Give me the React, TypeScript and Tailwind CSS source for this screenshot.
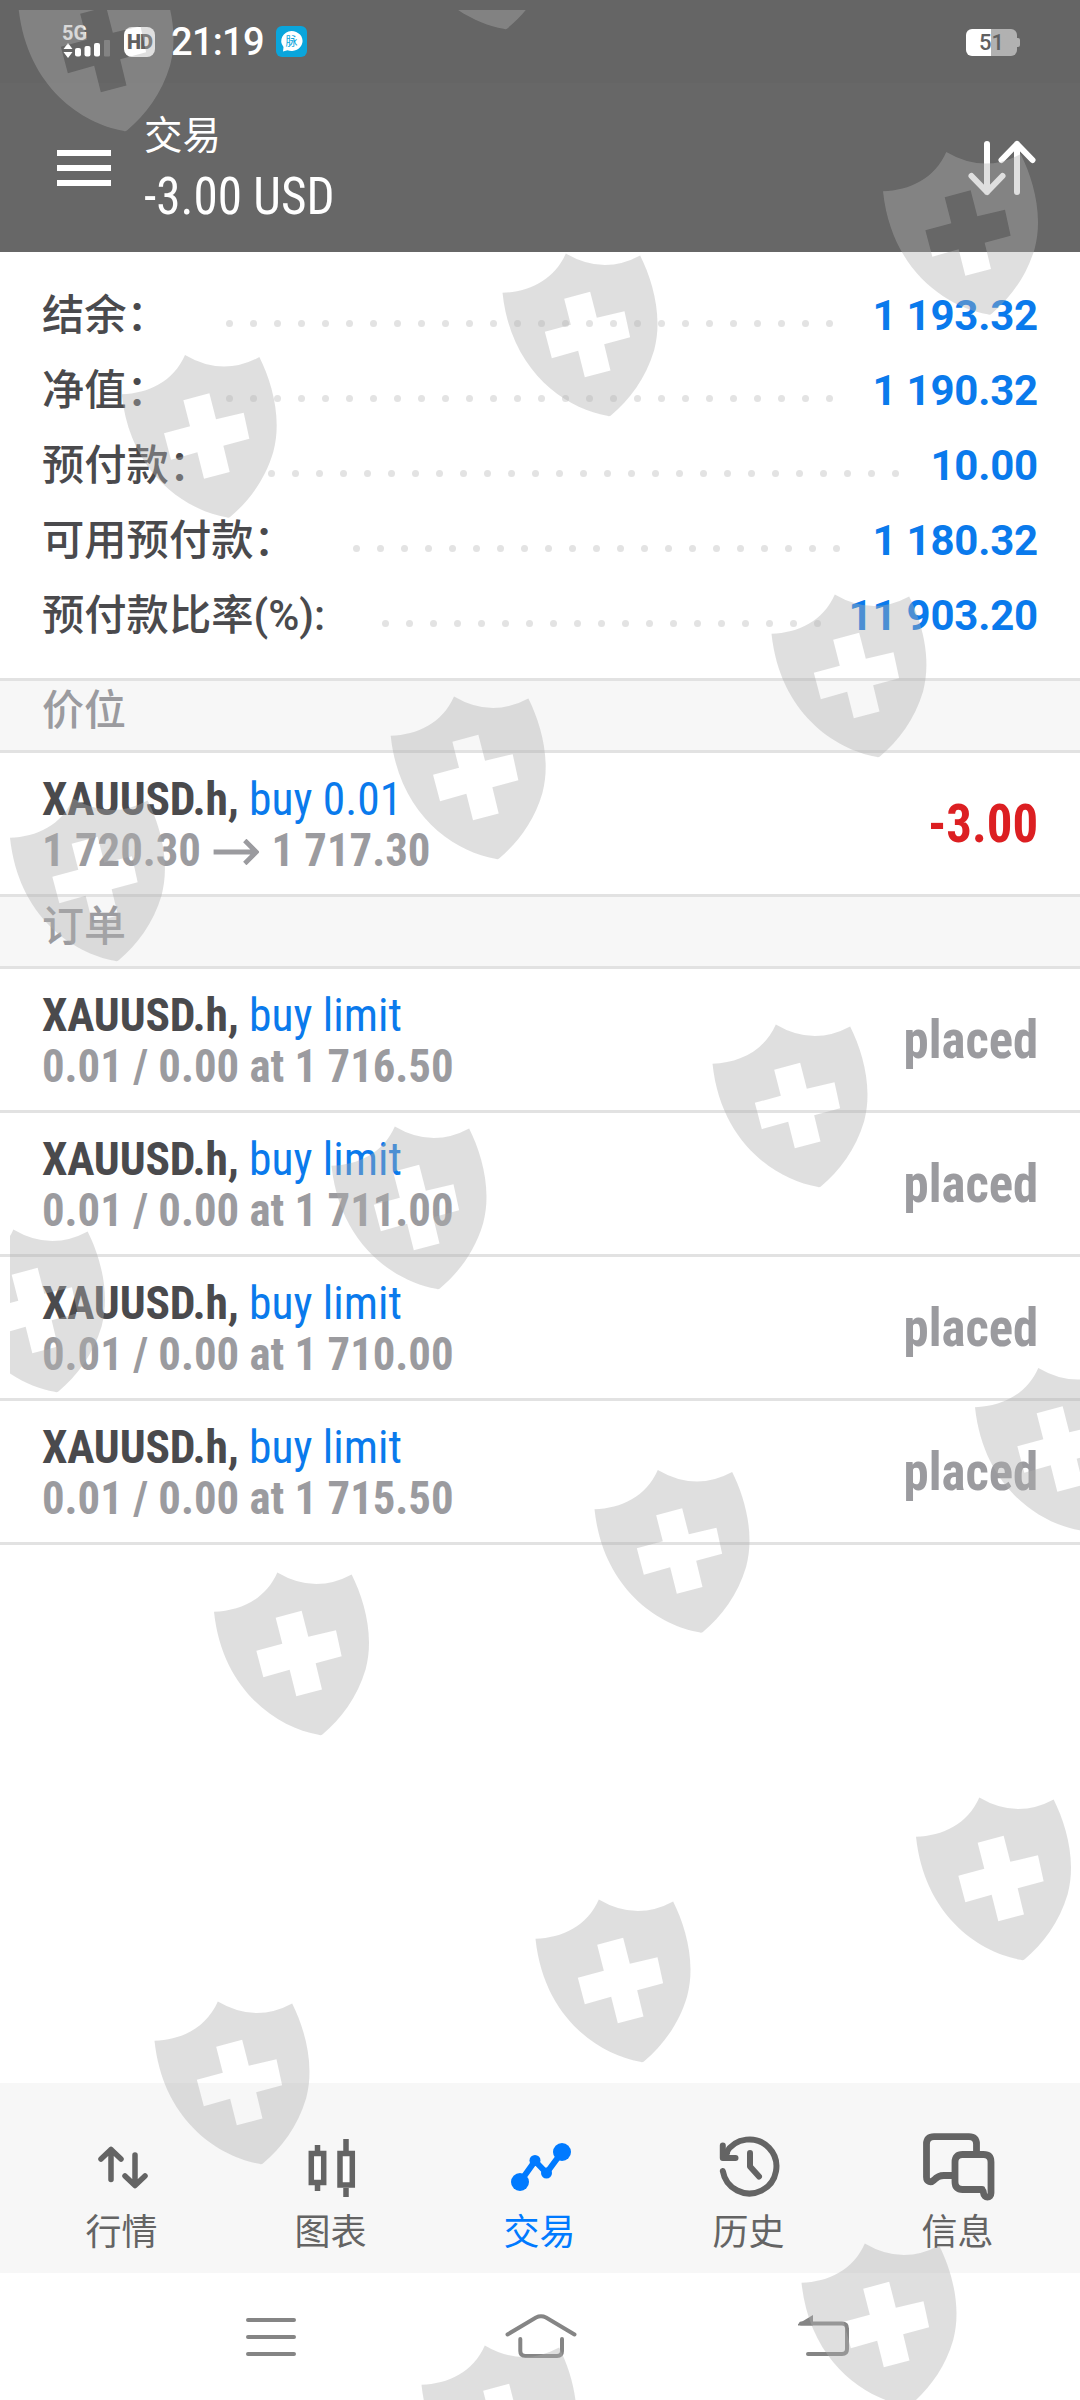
import type { ReactNode } from "react";

const account = [
  { label: "结余：", value: "1 193.32", dots: 26 },
  { label: "净值：", value: "1 190.32", dots: 26 },
  { label: "预付款：", value: "10.00", dots: 27 },
  { label: "可用预付款：", value: "1 180.32", dots: 21 },
  { label: "预付款比率(%):", value: "11 903.20", dots: 19 },
];

const orders = ["1 716.50", "1 711.00", "1 710.00", "1 715.50"];

// top-left corner of every watermark shield
const shields = [
  [399, -133.5], [18.5, -31.5],
  [883, 152], [502.5, 253.5], [121.7, 355],
  [771.5, 594.5], [390.7, 696.5], [10, 798.5],
  [712.5, 1024.5], [331.5, 1126.5], [-50, 1229.5],
  [975, 1368], [594.5, 1470], [214, 1572.5],
  [916, 1797.5], [535.5, 1899.5], [154.5, 2001.5],
  [801.5, 2243.5], [421.5, 2345.5],
];

const shieldPath =
  "M190 0Q302 66 413 6C450 80 482 190 455 290C430 375 380 440 326 485Q321 490 314 487C190 465 25 355 0 118C80 115 155 80 190 0Z" +
  "M185 136L263 115L283 193L366 173L383 251L305 272L324 351L247 371L227 292L148 314L127 235L205 214Z";

export default function App() {
  return (
    <div className="relative flex h-[2400px] w-[1080px] flex-col overflow-hidden bg-white font-[Roboto,'Noto_Sans_CJK_SC',sans-serif]">
      <StatusBar />
      <Header />
      <Account />
      <SectionTitle>价位</SectionTitle>
      <Row
        last
        action="buy 0.01"
        right={<Cond className="origin-right scale-x-[0.94] text-[54px] font-bold text-[#dc1f22]">-3.00</Cond>}
      >
        <span>1 720.30</span>
        <svg className="mx-[13px] mt-[5px]" width="48" height="26" fill="none" stroke="currentColor" strokeWidth="5">
          <path d="M0 13H45M33 1.5L45 13L33 24.500" />
        </svg>
        <span>1 717.30</span>
      </Row>
      <SectionTitle>订单</SectionTitle>
      {orders.map((price) => (
        <Row
          key={price}
          action="buy limit"
          right={<Cond className="origin-right scale-x-[0.94] text-[54px] font-bold text-[#9b9b9f]">placed</Cond>}
        >
          0.01 / 0.00 at {price}
        </Row>
      ))}
      <TabBar />
      <SystemNav />
      <Watermark />
    </div>
  );
}

function Cond({ children, className = "" }: { children: ReactNode; className?: string }) {
  return <span className={`whitespace-pre [font-stretch:75%] ${className}`}>{children}</span>;
}

function StatusBar() {
  return (
    <div className="flex h-[83px] shrink-0 items-start bg-[#656565] pl-[62px] pt-[26px] text-white">
      <div className="h-[32px] w-[48px]">
        <div className="h-[16px] text-[20px] font-bold leading-[14px] text-[#f4f4f4]">5G</div>
        <svg width="48" height="16" overflow="visible" fill="#fff">
          <path d="M6 1L10.500 7H1.500ZM6 16L10.500 10H1.500Z" />
          <rect x="13" y="6" width="6" height="8.500" rx="2" />
          <rect x="22.500" y="4" width="6" height="10.500" rx="2" />
          <rect x="32" y="1" width="6" height="13.500" rx="2" />
          <rect x="42" y="-2" width="6" height="16.500" rx="1" opacity=".2" />
        </svg>
      </div>
      <div className="ml-[14px] mt-px flex h-[30px] w-[31px] items-center justify-center rounded-[8px] bg-white text-[20px] font-black tracking-[-1px] text-[#606060]">
        HD
      </div>
      <div className="ml-[16px] w-[94px] text-[38px] font-medium leading-[33px] tracking-[-0.7px]">21:19</div>
      <svg className="ml-[11px]" width="31" height="31" viewBox="0 0 31 31">
        <rect width="31" height="31" rx="6" fill="#0aa5dc" />
        <path d="M15.500 5a11 10 0 1 1-4 19.300L7 25.500L7.500 21A11 10 0 0 1 15.500 5Z" fill="#fff" />
        <text x="15.500" y="19.500" textAnchor="middle" fontSize="12" fill="#0aa5dc">脉</text>
      </svg>
      <div className="ml-auto mr-[60px] mt-[3px] flex items-center">
        <div className="flex h-[27px] w-[51px] items-center justify-center rounded-[6px] bg-linear-to-r from-white from-50% to-[#b1b1b1] to-50% text-[22px] font-medium text-[#606060]">
          51
        </div>
        <div className="h-[9px] w-[3px] rounded-r-[2px] bg-[#b1b1b1]" />
      </div>
    </div>
  );
}

function Header() {
  return (
    <header className="flex h-[169px] shrink-0 items-start bg-[#676767] pl-[57px] text-white">
      <div className="mt-[67px] flex w-[54px] flex-col gap-[9px]">
        <div className="h-[6px] bg-white" />
        <div className="h-[6px] bg-white" />
        <div className="h-[6px] bg-white" />
      </div>
      <div className="ml-[33px] mt-[29px] flex flex-col items-start">
        <div className="h-[55px] text-[38.5px] leading-[48px]">交易</div>
        <Cond className="origin-left scale-x-[0.965] text-[51px] leading-[60px]">-3.00 USD</Cond>
      </div>
      <svg
        className="ml-auto mr-[44px] mt-[55px]"
        width="68"
        height="60"
        fill="none"
        stroke="#fff"
        strokeWidth="6"
        strokeLinecap="round"
        strokeLinejoin="round"
      >
        <path d="M19 6V54M3.500 38L19 54L34.500 38M49 54V6M33.500 22L49 6L64.500 22" />
      </svg>
    </header>
  );
}

function Account() {
  return (
    <section className="flex h-[426px] shrink-0 flex-col px-[42px] pt-[26px]">
      {account.map((row) => (
        <div key={row.label} className="flex h-[75px] items-center text-[42px] leading-[60px]">
          <span className="text-[42.3px] font-medium text-[#4a4a4d]">{row.label}</span>
          <span className="ml-[57px] mt-[15px] flex gap-[17px]">
            {Array.from({ length: row.dots }, (_, i) => (
              <i key={i} className="size-[7px] rounded-full bg-[#e3e3e3]" />
            ))}
          </span>
          <span className="ml-auto font-bold tracking-[-0.2px] text-[#0a7aec]">{row.value}</span>
        </div>
      ))}
    </section>
  );
}

function SectionTitle({ children }: { children: ReactNode }) {
  return (
    <div className="h-[75px] shrink-0 border-y-[3px] border-[#e2e2e2] bg-[#f7f7f7] pl-[42px] text-[42px] font-medium leading-[60px] text-[#9b9b9f]">
      {children}
    </div>
  );
}

interface RowProps {
  action: string;
  right: ReactNode;
  children: ReactNode;
  last?: boolean;
}

function Row({ action, right, children, last }: RowProps) {
  return (
    <div
      className={`flex shrink-0 items-center justify-between px-[42px] ${
        last ? "h-[141px]" : "h-[144px] border-b-[3px] border-[#e2e2e2]"
      }`}
    >
      <div className="text-[47px] leading-[51px]">
        <div className="origin-left scale-x-[0.968]">
          <Cond className="font-bold tracking-[-0.2px] text-[#4a4a4d]">XAUUSD.h, </Cond>
          <Cond className="text-[#0a7aec]">{action}</Cond>
        </div>
        <Cond className="flex origin-left scale-x-[0.952] items-center font-bold text-[#9b9b9f]">{children}</Cond>
      </div>
      {right}
    </div>
  );
}

const tabs = [
  {
    label: "行情",
    icon: <path d="M25 48.500V18.500M15 28L25 18.500L35 28M49 24V54M39 45L49 54.500L59 45" strokeWidth="5.500" />,
  },
  {
    label: "图表",
    icon: (
      <g strokeWidth="5.500" strokeLinecap="butt" strokeLinejoin="miter">
        <path d="M22.500 14V20M22.500 54V60M51 8V20M51 57V66" />
        <path d="M16.300 22.500H28.700V51.500H16.300ZM45 22.500H57.300V54H45Z" fill="#fcfcfc" />
      </g>
    ),
  },
  {
    label: "交易",
    active: true,
    icon: (
      <g strokeWidth="6">
        <path d="M16 51L31 30L42.500 42L58 21" />
        <g fill="currentColor" stroke="none">
          <circle cx="16" cy="51" r="9" />
          <circle cx="31" cy="29.500" r="5.500" />
          <circle cx="42.500" cy="42" r="5.500" />
          <circle cx="58" cy="21" r="9" />
        </g>
      </g>
    ),
  },
  {
    label: "历史",
    icon: (
      <g strokeWidth="6">
        <path d="M9.800 40A27 27 0 1 0 13 22" />
        <path d="M9.800 14.500V27H22.500M10.500 26L14 22" />
        <path d="M37 22V35.500L46 45.500" />
      </g>
    ),
  },
  {
    label: "信息",
    icon: (
      <g strokeWidth="6.800">
        <path d="M54.500 21V13Q54.500 5.700 47 5.700H12Q4.500 5.700 4.500 13V46C4.500 51 9 52 12 49Q16 44.500 22 44.500H30" />
        <path d="M60 58.500H40.500Q33 58.500 33 51V31Q33 23.500 40.500 23.500H61.500Q69 23.500 69 31V62C69 67.500 62 67.500 61.500 62Q61 58.500 58 58.500" />
      </g>
    ),
  },
];

function TabBar() {
  return (
    <nav className="mt-auto flex h-[190px] shrink-0 bg-[#f7f7f7] pl-[17px] pr-[18px] text-[#646464]">
      {tabs.map((tab) => (
        <div
          key={tab.label}
          className={`flex flex-1 flex-col items-center pt-[48px] ${tab.active ? "text-[#007aff]" : ""}`}
        >
          <svg
            width="72"
            height="72"
            overflow="visible"
            fill="none"
            stroke="currentColor"
            strokeLinecap="round"
            strokeLinejoin="round"
          >
            {tab.icon}
          </svg>
          <span className="mt-[5px] text-[36px] leading-[50px]">{tab.label}</span>
        </div>
      ))}
    </nav>
  );
}

function SystemNav() {
  return (
    <div className="flex h-[127px] shrink-0 items-start pl-[246px] pt-[39px]">
      <svg width="50" height="50" fill="none" stroke="#858585" strokeWidth="4" strokeLinecap="round">
        <path d="M2 8H48M2 25H48M2 42H48" />
      </svg>
      <svg className="ml-[209px]" width="72" height="50" fill="none" stroke="#858585" strokeWidth="4" strokeLinecap="round">
        <path d="M2.500 22.500L31 5.500Q36 3 41 5.500L69.500 22.500M15.300 27V39Q15.300 44 20.500 44H52Q57 44 57 39V27" />
      </svg>
      <svg className="ml-[220px]" width="54" height="50" fill="none" stroke="#858585" strokeWidth="4" strokeLinecap="round">
        <path d="M4 11.500H45Q50 11.500 50 16.500V37Q50 42 45 42H11" />
        <path d="M1 12L16 3V13.500H1Z" fill="#858585" stroke="none" />
      </svg>
    </div>
  );
}

function Watermark() {
  return (
    <svg className="pointer-events-none absolute left-[10px] top-[10px]" width="1070" height="2390" viewBox="10 10 1070 2390">
      <g fill="#afafaf" fillOpacity=".4" fillRule="evenodd">
        {shields.map(([x, y]) => (
          <path key={`${x},${y}`} d={shieldPath} transform={`translate(${x} ${y}) scale(.3333)`} />
        ))}
      </g>
    </svg>
  );
}
